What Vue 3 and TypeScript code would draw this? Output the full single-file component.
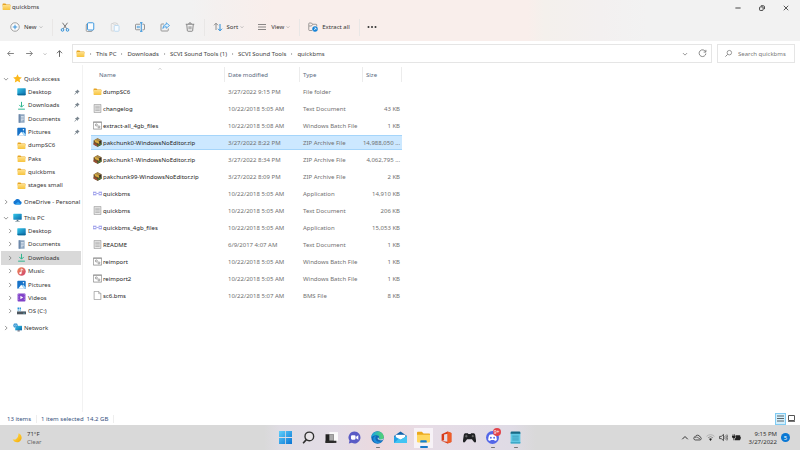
<script setup lang="ts">
import { ref } from 'vue'

interface TreeItem {
  label: string
  icon: string
  pinned?: boolean
}

interface FileRow {
  name: string
  icon: string
  date: string
  type: string
  size: string
}

const fileActions = [
  { label: 'Cut', icon: 'cut' },
  { label: 'Copy', icon: 'copy' },
  { label: 'Paste', icon: 'paste' },
  { label: 'Rename', icon: 'rename' },
  { label: 'Share', icon: 'share' },
  { label: 'Delete', icon: 'trash' },
]

const crumbs = ['This PC', 'Downloads', 'SCVI Sound Tools (1)', 'SCVI Sound Tools', 'quickbms']

const quickAccess: TreeItem[] = [
  { label: 'Desktop', icon: 'desktop', pinned: true },
  { label: 'Downloads', icon: 'download', pinned: true },
  { label: 'Documents', icon: 'document', pinned: true },
  { label: 'Pictures', icon: 'picture', pinned: true },
  { label: 'dumpSC6', icon: 'folder' },
  { label: 'Paks', icon: 'folder' },
  { label: 'quickbms', icon: 'folder' },
  { label: 'stages small', icon: 'folder' },
]

const thisPc: TreeItem[] = [
  { label: 'Desktop', icon: 'desktop' },
  { label: 'Documents', icon: 'document' },
  { label: 'Downloads', icon: 'download' },
  { label: 'Music', icon: 'music' },
  { label: 'Pictures', icon: 'picture' },
  { label: 'Videos', icon: 'video' },
  { label: 'OS (C:)', icon: 'drive' },
]

const files: FileRow[] = [
  { name: 'dumpSC6', icon: 'folder', date: '3/27/2022 9:15 PM', type: 'File folder', size: '' },
  { name: 'changelog', icon: 'text', date: '10/22/2018 5:05 AM', type: 'Text Document', size: '43 KB' },
  { name: 'extract-all_4gb_files', icon: 'batch', date: '10/22/2018 5:08 AM', type: 'Windows Batch File', size: '1 KB' },
  { name: 'pakchunk0-WindowsNoEditor.zip', icon: 'zip', date: '3/27/2022 8:22 PM', type: 'ZIP Archive File', size: '14,988,050 ...' },
  { name: 'pakchunk1-WindowsNoEditor.zip', icon: 'zip', date: '3/27/2022 8:34 PM', type: 'ZIP Archive File', size: '4,062,795 ...' },
  { name: 'pakchunk99-WindowsNoEditor.zip', icon: 'zip', date: '3/27/2022 8:09 PM', type: 'ZIP Archive File', size: '2 KB' },
  { name: 'quickbms', icon: 'app', date: '10/22/2018 5:05 AM', type: 'Application', size: '14,910 KB' },
  { name: 'quickbms', icon: 'text', date: '10/22/2018 5:05 AM', type: 'Text Document', size: '206 KB' },
  { name: 'quickbms_4gb_files', icon: 'app', date: '10/22/2018 5:05 AM', type: 'Application', size: '15,053 KB' },
  { name: 'README', icon: 'text', date: '6/9/2017 4:07 AM', type: 'Text Document', size: '1 KB' },
  { name: 'reimport', icon: 'batch', date: '10/22/2018 5:05 AM', type: 'Windows Batch File', size: '1 KB' },
  { name: 'reimport2', icon: 'batch', date: '10/22/2018 5:05 AM', type: 'Windows Batch File', size: '1 KB' },
  { name: 'sc6.bms', icon: 'blank', date: '10/22/2018 5:07 AM', type: 'BMS File', size: '8 KB' },
]

const apps = [
  { label: 'Start', icon: 'start' },
  { label: 'Search', icon: 'magnifier' },
  { label: 'Task view', icon: 'taskview' },
  { label: 'Chat', icon: 'chat' },
  { label: 'Edge', icon: 'edge', running: true },
  { label: 'Mail', icon: 'mail' },
  { label: 'File Explorer', icon: 'explorer', active: true },
  { label: 'Office', icon: 'office' },
  { label: 'Games', icon: 'gamepad' },
  { label: 'Discord', icon: 'discord', running: true, badge: '9+' },
  { label: 'Notepad', icon: 'notepad', running: true },
]

const selected = ref(3)
const query = ref('')
</script>

<template>
  <svg class="defs" aria-hidden="true">
    <defs>
      <linearGradient id="g-folder" x1="0" y1="0" x2="0" y2="1"><stop offset="0" stop-color="#ffe08a" /><stop offset="1" stop-color="#f7c440" /></linearGradient>
      <linearGradient id="g-desk" x1="0" y1="0" x2="1" y2="1"><stop offset="0" stop-color="#35c8ea" /><stop offset="1" stop-color="#0a67a8" /></linearGradient>
      <linearGradient id="g-start" x1="0" y1="0" x2="1" y2="1"><stop offset="0" stop-color="#5fd0fb" /><stop offset="1" stop-color="#0a74d4" /></linearGradient>
      <linearGradient id="g-edge" x1="0" y1="0" x2="1" y2="0"><stop offset="0" stop-color="#1ba4e6" /><stop offset="1" stop-color="#55d66b" /></linearGradient>
      <linearGradient id="g-moon" x1="0" y1="0" x2="1" y2="1"><stop offset="0" stop-color="#ffe45c" /><stop offset="1" stop-color="#f5a800" /></linearGradient>
      <linearGradient id="g-music" x1="0" y1="0" x2="1" y2="1"><stop offset="0" stop-color="#f08a54" /><stop offset="1" stop-color="#cf4470" /></linearGradient>
    </defs>
    <symbol id="i-folder" viewBox="0 0 16 16"><path d="M1 3.500q0-1 1-1h4l1.800 1.800H14q1 0 1 1V8H1z" fill="#e6a422" /><rect x="1" y="5.200" width="14" height="8.800" rx="1" fill="url(#g-folder)" /></symbol>
    <symbol id="i-star" viewBox="0 0 16 16"><path d="M8 0.500l2.300 5 5.400.6-4 3.700 1.100 5.400L8 12.500l-4.800 2.700 1.100-5.400-4-3.700 5.400-.6z" fill="#fbb81c" /></symbol>
    <symbol id="i-desktop" viewBox="0 0 16 16"><rect x="0.500" y="2" width="15" height="12.500" rx="1" fill="url(#g-desk)" /><path d="M1 12h14v1.500q0 1-1 1H2q-1 0-1-1z" fill="#0b6c9c" /></symbol>
    <symbol id="i-download" viewBox="0 0 16 16"><path d="M8 1.500v9M4 7l4 4 4-4M2 14.500h12" fill="none" stroke="#26b38a" stroke-width="1.700" /></symbol>
    <symbol id="i-document" viewBox="0 0 16 16"><path d="M3 0.500h10.500v15H3z" fill="#8ea6c0" /><path d="M3 0.500h3v15H3z" fill="#6d89aa" /><path d="M7 4.500h5M7 7h5M7 9.500h5M7 12h3" stroke="#f4f8fc" stroke-width="1.200" /></symbol>
    <symbol id="i-picture" viewBox="0 0 16 16"><rect x="0.500" y="1.500" width="15" height="14" rx="1.500" fill="#1672c8" /><path d="M2 15.500l5.500-7 6.500 7z" fill="#fff" /><path d="M9 10l2-2 4 5v2h-2z" fill="#a8dcfa" /><circle cx="11.500" cy="5" r="1.300" fill="#fff" /></symbol>
    <symbol id="i-music" viewBox="0 0 16 16"><circle cx="8" cy="8" r="7.500" fill="url(#g-music)" /><path d="M7.500 11V3.500l3.500 2" fill="none" stroke="#fff" stroke-width="1.400" /><circle cx="6" cy="11" r="2" fill="#fff" /></symbol>
    <symbol id="i-video" viewBox="0 0 16 16"><rect x="1" y="1" width="14" height="14" rx="1.500" fill="#8142c8" /><path d="M6 5l5 3-5 3z" fill="#fff" /><path d="M3 2v12M13 2v12" stroke="#c5a0ee" stroke-width="1.200" stroke-dasharray="1.500 1.500" /></symbol>
    <symbol id="i-drive" viewBox="0 0 16 16"><path d="M0 8h16v5H0z" fill="#4d565e" /><path d="M1 7h14l1 2H0z" fill="#929da6" /><path d="M1 1h2.500v2.500H1zM4.500 1H7v2.500H4.500zM1 4.300h2.500v2H1zM4.500 4.300H7v2H4.500z" fill="#1d91d8" /><path d="M11 11h3" stroke="#70d9ff" /></symbol>
    <symbol id="i-cloud" viewBox="0 0 16 16"><path d="M4 13.500a3.700 3.700 0 0 1-.3-7.300A5 5 0 0 1 12.800 7a3.300 3.300 0 0 1-.3 6.500z" fill="#1576d1" /><path d="M3.500 13.300L9 8.500l5 4.500q-.7.500-1.500.5H4z" fill="#2ea2ee" /></symbol>
    <symbol id="i-pc" viewBox="0 0 16 16"><rect x="0.500" y="1.500" width="15" height="10.500" rx="0.800" fill="url(#g-desk)" /><path d="M6.500 12h3v2h2.500v1H4v-1h2.500z" fill="#56717f" /></symbol>
    <symbol id="i-network" viewBox="0 0 16 16"><rect x="4" y="5" width="12" height="8" fill="url(#g-desk)" /><path d="M8 13h4v2H8z" fill="#667" /><circle cx="4.500" cy="4.500" r="4" fill="#2b8ccc" /><path d="M1 4.500h7M4.500 .5q-3 4 0 8M4.500.5q3 4 0 8" stroke="#b2e3fa" fill="none" stroke-width="0.700" /></symbol>
    <symbol id="i-pin" viewBox="0 0 16 16"><path d="M9 1l6 6-2 .7-2.500 2.500-.5 3-3-3L2 15l-1-1 4.500-5-3-3 3.200-.5L8 3z" fill="#7c8790" /></symbol>
    <symbol id="i-text" viewBox="0 0 16 16"><path d="M2 .7h12v14.600H2z" fill="#e9e9e9" stroke="#989898" stroke-width="1.200" /><path d="M4 4h8M4 6.500h8M4 9h8M4 11.500h8" stroke="#a6a6a6" stroke-width="1.200" /></symbol>
    <symbol id="i-blank" viewBox="0 0 16 16"><path d="M2 .7h8l4 4v10.600H2z" fill="#fff" stroke="#8c8c8c" stroke-width="1.200" /><path d="M10 .7v4h4" fill="none" stroke="#8c8c8c" /></symbol>
    <symbol id="i-batch" viewBox="0 0 16 16"><path d="M.6 1.600h14.800v12.800H.6z" fill="#fff" stroke="#777" stroke-width="1.200" /><path d="M.6 2.500h14.800" stroke="#999" stroke-width="1.500" /><circle cx="6" cy="7" r="1.800" fill="none" stroke="#777" stroke-width="1.200" /><circle cx="10.500" cy="10.500" r="1.800" fill="none" stroke="#777" stroke-width="1.200" /></symbol>
    <symbol id="i-zip" viewBox="0 0 16 16"><path d="M1 4.500L8 .5l7 3.500v8l-7 3.500L1 12z" fill="#70522e" /><path d="M1 4.500L8 .5l7 3.500-7 3.500z" fill="#a8894a" /><path d="M8 7.500l7-3.500v8l-7 3.500z" fill="#393029" /><path d="M3.500 3L11 6.500v4L3.500 7z" fill="#d8ac3e" /><path d="M1 9l7 3.500V15l-7-3.500z" fill="#a44b35" /><path d="M8 12l7-3v2.500l-7 3.500z" fill="#527b3b" /></symbol>
    <symbol id="i-app" viewBox="0 0 16 16"><path d="M0 5h6v1.500H0zM0 9.500h6V11H0zM10 5h6v1.500h-6zM10 9.500h6V11h-6z" fill="#8b8de6" /><path d="M0 6.500h1.300v3H0zM4.700 6.500H6v3H4.700zM10 6.500h1.300v3H10zM14.700 6.500H16v3h-1.300z" fill="#a5a7ee" /><path d="M6 8h4" stroke="#8b8de6" stroke-width="1.300" /></symbol>

    <symbol id="i-plus" viewBox="0 0 20 20"><circle cx="10" cy="10" r="8.500" fill="#fbfbfb" stroke="#858585" stroke-width="1.500" /><path d="M10 5.500v9M5.500 10h9" stroke="#1482d6" stroke-width="1.600" /></symbol>
    <symbol id="i-cut" viewBox="0 0 20 20"><path d="M5 1.500l8.500 12M15 1.500l-8.500 12" stroke="#666" stroke-width="1.700" /><circle cx="5" cy="15.800" r="2.600" fill="none" stroke="#1482d6" stroke-width="1.700" /><circle cx="15" cy="15.800" r="2.600" fill="none" stroke="#1482d6" stroke-width="1.700" /></symbol>
    <symbol id="i-copy" viewBox="0 0 20 20"><rect x="2.500" y="4" width="12" height="15" rx="2" fill="none" stroke="#898989" stroke-width="1.600" /><rect x="5" y="1.500" width="12.500" height="14.500" rx="2" fill="#f8fcff" stroke="#2b8fdd" stroke-width="1.800" /></symbol>
    <symbol id="i-paste" viewBox="0 0 20 20"><path d="M8 18H3.500q-1 0-1-1V4q0-1 1-1H6m7 0h1.500q1 0 1 1v2" fill="none" stroke="#cecece" stroke-width="1.500" /><rect x="6" y="1.500" width="7" height="3" rx="1.500" fill="none" stroke="#cecece" stroke-width="1.300" /><rect x="8.500" y="7" width="9.500" height="11.500" rx="1.500" fill="#f6fbff" stroke="#aed2ec" stroke-width="1.500" /></symbol>
    <symbol id="i-rename" viewBox="0 0 20 20"><path d="M10 4.500H2.500q-1.500 0-1.500 1.500v8q0 1.500 1.500 1.500H10M15 4.500h2.500Q19 4.500 19 6v8q0 1.500-1.500 1.500H15" fill="none" stroke="#777" stroke-width="1.500" /><path d="M4 8.500h5v3H4z" fill="#8cc4ee" stroke="#55a3dd" stroke-width="1" /><path d="M12.500 1.500v17M10 1.500h5M10 18.500h5" stroke="#1482d6" stroke-width="1.700" /></symbol>
    <symbol id="i-share" viewBox="0 0 20 20"><path d="M8 4H3.500Q2 4 2 5.500v11Q2 18 3.500 18h11.500q1.500 0 1.500-1.500V13" fill="none" stroke="#777" stroke-width="1.500" /><path d="M12.500 1.500L19 7l-6.500 5.500V9.300Q8.500 9 5.500 13q.5-7.500 7-8.300z" fill="#e5f3fd" stroke="#2b8fdd" stroke-width="1.500" /></symbol>
    <symbol id="i-trash" viewBox="0 0 20 20"><path d="M1.500 4.500h17M7.500 4q0-2.500 2.500-2.500T12.500 4M3.500 5l1.200 12.200q.2 1.300 1.500 1.300h7.600q1.300 0 1.500-1.300L16.500 5M8.200 8.500v6M11.800 8.500v6" fill="none" stroke="#666" stroke-width="1.500" /></symbol>
    <symbol id="i-sort" viewBox="0 0 20 20"><path d="M6 16V2.500M2 6.500l4-4 4 4" fill="none" stroke="#777" stroke-width="1.600" /><path d="M14 4v13.500M10 13.500l4 4 4-4" fill="none" stroke="#1482d6" stroke-width="1.800" /></symbol>
    <symbol id="i-view" viewBox="0 0 10 10"><path d="M1 2.500h8M1 5h8M1 7.500h8" stroke="#8a8786" /></symbol>
    <symbol id="i-extract" viewBox="0 0 20 20"><path d="M8 17H3Q1.500 17 1.500 15.500v-12Q1.500 2 3 2h4l2 2.500h7q1.500 0 1.500 1.500v3M2 8h5l2-3" fill="none" stroke="#777" stroke-width="1.400" /><circle cx="14" cy="14" r="5.500" fill="#1482d6" /><path d="M11.500 16.500l4.500-4.500M12.500 12H16v3.500" fill="none" stroke="#fff" stroke-width="1.300" /></symbol>
    <symbol id="i-dots" viewBox="0 0 20 20"><circle cx="3" cy="10" r="2" fill="#333" /><circle cx="10" cy="10" r="2" fill="#333" /><circle cx="17" cy="10" r="2" fill="#333" /></symbol>
    <symbol id="i-chevron" viewBox="0 0 16 16"><path d="M2.500 5.500L8 11l5.500-5.500" fill="none" stroke="currentColor" stroke-width="2" /></symbol>
    <symbol id="i-arrow" viewBox="0 0 16 16"><path d="M14 8H3M7.500 3.500L3 8l4.500 4.500" fill="none" stroke="currentColor" stroke-width="1.600" /></symbol>
    <symbol id="i-refresh" viewBox="0 0 16 16"><path d="M13.500 5A6 6 0 1 0 14 8M14 1.500V5.500h-4" fill="none" stroke="currentColor" stroke-width="1.500" /></symbol>
    <symbol id="i-search" viewBox="0 0 16 16"><circle cx="9.500" cy="6.500" r="4" fill="none" stroke="currentColor" stroke-width="1.300" /><path d="M6.500 9.500L2.500 13.500" stroke="currentColor" stroke-width="1.500" /></symbol>
    <symbol id="i-min" viewBox="0 0 16 16"><path d="M1 8h14" stroke="#222" stroke-width="2.200" /></symbol>
    <symbol id="i-restore" viewBox="0 0 16 16"><rect x="1.500" y="5" width="9.500" height="9.500" rx="2" fill="none" stroke="#222" stroke-width="2.200" /><path d="M5 2h6.500q3 0 3 3v6" fill="none" stroke="#222" stroke-width="2.200" /></symbol>
    <symbol id="i-close" viewBox="0 0 16 16"><path d="M2 2l12 12M14 2L2 14" stroke="#222" stroke-width="2" /></symbol>

    <symbol id="i-start" viewBox="0 0 24 24"><path d="M0 0h11.300v11.300H0zM12.700 0H24v11.300H12.700zM0 12.700h11.300V24H0zM12.700 12.700H24V24H12.700z" fill="url(#g-start)" /></symbol>
    <symbol id="i-magnifier" viewBox="0 0 24 24"><circle cx="13.500" cy="10" r="8" fill="#e8e4e8" stroke="#303030" stroke-width="2.500" /><path d="M8 16l-6 6.500" stroke="#303030" stroke-width="3" /></symbol>
    <symbol id="i-taskview" viewBox="0 0 24 24"><path d="M8 2h16v16H8z" fill="#fafafa" /><path d="M1 6h15v16H1z" fill="#222" /><path d="M8 6h8v12H8z" fill="#aaa" /><path d="M1 18h20v4H1z" fill="#2a2a2a" /></symbol>
    <symbol id="i-chat" viewBox="0 0 24 24"><path d="M12 1a11 11 0 1 1-5 20.800L1.500 23l1.200-5A11 11 0 0 1 12 1z" fill="#5a5bc5" /><rect x="5.500" y="8" width="8.500" height="8" rx="2" fill="#fff" /><path d="M15 10.500L19 8v8l-4-2.500z" fill="#fff" /></symbol>
    <symbol id="i-edge" viewBox="0 0 24 24"><circle cx="12" cy="12" r="11.500" fill="#1267b4" /><path d="M.7 13C0-3 23.500-3 23.500 11.500c0 5-8 5.500-9 3 2-4-1-7-5-6.500C5 8.300 2 10 .7 13z" fill="url(#g-edge)" /><path d="M8.500 11c-2 6 4 11 12 7.500C17 24.500 5 24 4 15c0-4 2.500-6 6-6z" fill="#1d8edb" /><path d="M13 11.500c-1.500 2-.5 6 8 5.500l2-3q-5 3-8 1z" fill="#e5eaf2" /></symbol>
    <symbol id="i-mail" viewBox="0 0 24 24"><path d="M0 9L12 1l12 8v13H0z" fill="#1263ac" /><path d="M3 7h18v10H3z" fill="#fff" /><path d="M0 9l12 7 12-7v13H0z" fill="#25a0e5" /><path d="M0 22l9-8 3 2 12-7v13z" fill="#42c4f3" /></symbol>
    <symbol id="i-explorer" viewBox="0 0 24 24"><path d="M0 3Q0 1.500 1.500 1.500H9l3 3h10.500Q24 4.500 24 6v12H0z" fill="#eba81c" /><path d="M0 7h24v12.500q0 1.500-1.500 1.500h-21Q0 21 0 19.500z" fill="#ffd760" /><path d="M6 21v-2.500q0-1.500 1.500-1.500h9q1.500 0 1.500 1.500V21z" fill="#1380d2" /></symbol>
    <symbol id="i-office" viewBox="0 0 24 24"><path d="M3 6L14 1l7 2.500v17L14 23 3 18.500l11 1.500V5L7.500 6.500v10.500L3 18.500z" fill="#d83b19" /><path d="M14 1l7 2.500v17L14 23z" fill="#ef5e28" /></symbol>
    <symbol id="i-gamepad" viewBox="0 0 24 24"><path d="M4 4h5l1 1.500h4L15 4h5q2 0 2.500 3L24 17q.5 4-2 4-1.500 0-3.500-3l-2-3h-9l-2 3Q3.500 21 2 21q-2.500 0-2-4L1.500 7Q2 4 4 4z" fill="#202124" /><path d="M6 7v5M3.500 9.500h5" stroke="#777" stroke-width="1.500" /><circle cx="18" cy="9.500" r="2" fill="#666" /></symbol>
    <symbol id="i-discord" viewBox="0 0 24 24"><circle cx="12" cy="12" r="12" fill="#5467e8" /><path d="M6.500 7Q12 5 17.500 7q3 5 2.500 9.500-2 1.500-4 1.700L15 16.500H9l-1 1.700q-2-.2-4-1.700Q3.500 12 6.500 7z" fill="#fff" /><circle cx="9" cy="12.500" r="1.700" fill="#5467e8" /><circle cx="15" cy="12.500" r="1.700" fill="#5467e8" /></symbol>
    <symbol id="i-notepad" viewBox="0 0 24 24"><rect x="3" y="2" width="18" height="21" rx="1.500" fill="#62c8e4" /><path d="M3 3.500Q3 1 5 1h14q2 0 2 2.500V5H3z" fill="#176985" /><path d="M6 9.500h12M6 13h12M6 16.500h12" stroke="#2c8fae" stroke-width="1.300" /><path d="M3 20.500h18V23H3z" fill="#3ba6c4" /></symbol>
    <symbol id="i-moon" viewBox="0 0 24 24"><path d="M15.500 2A11 11 0 1 1 1.500 15.500Q5 18 9.500 16 16 12 15.500 2z" fill="url(#g-moon)" /></symbol>
    <symbol id="i-skycloud" viewBox="0 0 20 16"><path d="M5 13.500a3.700 3.700 0 0 1-.3-7.300A6 6 0 0 1 15.800 7a3.300 3.300 0 0 1-.3 6.500z" fill="none" stroke="#333" stroke-width="1.800" /><path d="M4.500 8q3-2 6 0l5 3" fill="none" stroke="#333" stroke-width="1.500" /></symbol>
    <symbol id="i-wifi" viewBox="0 0 16 16"><path d="M1 6q7-6 14 0" fill="none" stroke="#aaa" stroke-width="1.500" /><path d="M3.500 8.500q4.500-4 9 0" fill="none" stroke="#888" stroke-width="1.500" /><path d="M5.500 10.500q2.500-2 5 0L8 14z" fill="#222" /></symbol>
    <symbol id="i-speaker" viewBox="0 0 16 16"><path d="M1 6h3l4-3.500v11L4 10H1z" fill="none" stroke="#333" stroke-width="1.400" /><path d="M10 6q1.500 2 0 4M12 4q3 4 0 8M14 2.500q3.500 5.500 0 11" fill="none" stroke="#444" stroke-width="1.200" /></symbol>
    <symbol id="i-battery" viewBox="0 0 20 18"><path d="M8 4h9q1.500 0 1.500 1.500v8q0 1.500-1.500 1.500H6v-3q3-1 3-5z" fill="#222" /><path d="M18.500 8H20v3.500h-1.500z" fill="#222" /><path d="M0 5h8v3q-1 3-4 3T0 8zM1.500 1.500H3V5H1.500zM5 1.500h1.500V5H5zM3.300 10h1.500v5H3.300z" fill="#222" /></symbol>
    <symbol id="i-details" viewBox="0 0 7 7"><path d="M0 1h7M0 3.500h7M0 6h7" stroke="#5b6468" /></symbol>
    <symbol id="i-large" viewBox="0 0 7 7"><path d="M.5.500h6v5h-6z" fill="#fff" stroke="#555" /><path d="M0 6.500h7" stroke="#777" /></symbol>
  </svg>

  <div class="screen">
    <main class="window">
      <header class="chrome">
        <div class="titlebar">
          <svg class="ico"><use href="#i-folder" /></svg>
          <h1>quickbms</h1>
          <div class="captions">
            <button type="button" aria-label="Minimize"><svg><use href="#i-min" /></svg></button>
            <button type="button" aria-label="Restore"><svg><use href="#i-restore" /></svg></button>
            <button type="button" aria-label="Close"><svg><use href="#i-close" /></svg></button>
          </div>
        </div>
        <div class="toolbar">
          <div class="tools">
            <button type="button" class="wide"><svg class="tool"><use href="#i-plus" /></svg>New<svg class="tiny"><use href="#i-chevron" /></svg></button>
          </div>
          <div class="tools">
            <button v-for="a in fileActions" :key="a.label" type="button" class="square" :aria-label="a.label">
              <svg class="tool"><use :href="'#i-' + a.icon" /></svg>
            </button>
          </div>
          <div class="tools">
            <button type="button" class="wide"><svg class="tool"><use href="#i-sort" /></svg>Sort<svg class="tiny"><use href="#i-chevron" /></svg></button>
            <button type="button" class="wide"><svg class="tool"><use href="#i-view" /></svg>View<svg class="tiny"><use href="#i-chevron" /></svg></button>
          </div>
          <div class="tools">
            <button type="button" class="wide"><svg class="tool"><use href="#i-extract" /></svg>Extract all</button>
          </div>
          <div class="tools">
            <button type="button" class="square" aria-label="See more"><svg class="tool"><use href="#i-dots" /></svg></button>
          </div>
        </div>
      </header>

      <div class="navbar">
        <div class="history">
          <button type="button" aria-label="Back"><svg class="ico"><use href="#i-arrow" /></svg></button>
          <button type="button" aria-label="Forward"><svg class="ico flip"><use href="#i-arrow" /></svg></button>
          <button type="button" aria-label="Recent locations"><svg class="tiny"><use href="#i-chevron" /></svg></button>
          <button type="button" aria-label="Up"><svg class="ico up"><use href="#i-arrow" /></svg></button>
        </div>
        <nav class="address" aria-label="Address">
          <svg class="ico"><use href="#i-folder" /></svg>
          <template v-for="c in crumbs" :key="c">
            <svg class="tiny right"><use href="#i-chevron" /></svg>
            <a href="#">{{ c }}</a>
          </template>
          <div class="address-end">
            <button type="button" aria-label="Previous locations"><svg class="small"><use href="#i-chevron" /></svg></button>
            <button type="button" aria-label="Refresh"><svg class="ico"><use href="#i-refresh" /></svg></button>
          </div>
        </nav>
        <label class="search">
          <svg class="ico"><use href="#i-search" /></svg>
          <input v-model="query" type="text" aria-label="Search quickbms" placeholder="Search quickbms" />
        </label>
      </div>

      <div class="body">
        <nav class="tree" aria-label="Folders">
          <ul class="quick">
            <li>
              <a href="#"><svg class="small"><use href="#i-chevron" /></svg><svg class="ico"><use href="#i-star" /></svg>Quick access</a>
            </li>
            <li v-for="t in quickAccess" :key="t.label">
              <a href="#" class="child"><svg class="ico"><use :href="'#i-' + t.icon" /></svg>{{ t.label }}<svg v-if="t.pinned" class="pin"><use href="#i-pin" /></svg></a>
            </li>
          </ul>
          <ul>
            <li>
              <a href="#"><svg class="small right"><use href="#i-chevron" /></svg><svg class="ico"><use href="#i-cloud" /></svg>OneDrive - Personal</a>
            </li>
          </ul>
          <ul class="pc">
            <li>
              <a href="#"><svg class="small"><use href="#i-chevron" /></svg><svg class="ico"><use href="#i-pc" /></svg>This PC</a>
            </li>
            <li v-for="t in thisPc" :key="t.label" :class="{ current: t.label === 'Downloads' }">
              <a href="#" class="branch"><svg class="small right"><use href="#i-chevron" /></svg><svg class="ico"><use :href="'#i-' + t.icon" /></svg>{{ t.label }}</a>
            </li>
          </ul>
          <ul>
            <li>
              <a href="#"><svg class="small right"><use href="#i-chevron" /></svg><svg class="ico"><use href="#i-network" /></svg>Network</a>
            </li>
          </ul>
        </nav>

        <section class="listing" aria-label="Files">
          <table>
            <colgroup>
              <col class="c-name" />
              <col class="c-date" />
              <col class="c-type" />
              <col class="c-size" />
            </colgroup>
            <thead>
              <tr>
                <th>Name<svg class="tiny sorted"><use href="#i-chevron" /></svg></th>
                <th>Date modified</th>
                <th>Type</th>
                <th>Size</th>
              </tr>
            </thead>
            <tbody>
              <tr v-for="(f, i) in files" :key="i" :class="{ selected: i === selected }" @click="selected = i">
                <td><div class="name"><svg class="ico"><use :href="'#i-' + f.icon" /></svg>{{ f.name }}</div></td>
                <td>{{ f.date }}</td>
                <td>{{ f.type }}</td>
                <td>{{ f.size }}</td>
              </tr>
            </tbody>
          </table>
        </section>
      </div>

      <footer class="status">
        <span class="count">13 items</span>
        <span class="chosen"><span>1 item selected</span><span>14.2 GB</span></span>
        <div class="modes">
          <button type="button" class="on" aria-label="Details"><svg class="ico"><use href="#i-details" /></svg></button>
          <button type="button" aria-label="Large icons"><svg class="ico"><use href="#i-large" /></svg></button>
        </div>
      </footer>
    </main>

    <footer class="taskbar">
      <button type="button" class="weather">
        <svg><use href="#i-moon" /></svg>
        <span><b>71°F</b><em>Clear</em></span>
      </button>
      <div class="apps">
        <button v-for="a in apps" :key="a.label" type="button" :aria-label="a.label" :class="{ active: a.active, running: a.running }">
          <svg><use :href="'#i-' + a.icon" /></svg>
          <span v-if="a.badge" class="badge">{{ a.badge }}</span>
        </button>
      </div>
      <div class="tray">
        <button type="button" aria-label="Show hidden icons"><svg class="up-chevron"><use href="#i-chevron" /></svg></button>
        <button type="button" aria-label="OneDrive"><svg><use href="#i-skycloud" /></svg></button>
        <button type="button" aria-label="Wi-Fi"><svg><use href="#i-wifi" /></svg></button>
        <button type="button" aria-label="Volume"><svg><use href="#i-speaker" /></svg></button>
        <button type="button" aria-label="Battery"><svg><use href="#i-battery" /></svg></button>
        <button type="button" class="clock"><span>9:15 PM</span><span>3/27/2022</span></button>
        <button type="button" class="notices">5</button>
      </div>
    </footer>
  </div>
</template>

<style>
body {
  margin: 0;
}
</style>

<style scoped>
.defs {
  position: absolute;
  width: 0;
  height: 0;
}
.screen {
  display: flex;
  flex-direction: column;
  min-height: 100vh;
  background: #fff;
  color: #333;
  font-family: 'Noto Sans', 'Open Sans', sans-serif;
  font-size: 6px;
  line-height: 8px;
  white-space: nowrap;
}
svg {
  display: block;
  flex: none;
  width: 9px;
  height: 9px;
}
.tiny {
  width: 4px;
  height: 4px;
}
.small {
  width: 6px;
  height: 6px;
}
.tool {
  width: 10px;
  height: 10px;
}
.right {
  transform: rotate(-90deg);
}
.flip {
  transform: scaleX(-1);
}
.up {
  transform: rotate(90deg);
}
button {
  display: flex;
  align-items: center;
  justify-content: center;
  padding: 0;
  border: 0;
  background: none;
  color: inherit;
  font: inherit;
}
a {
  color: inherit;
  text-decoration: none;
}
ul {
  margin: 0;
  padding: 0;
  list-style: none;
}

.window {
  display: flex;
  flex: 1;
  flex-direction: column;
}
.chrome {
  background: linear-gradient(90deg, #f2f2f2 24%, #f4f0ef 27%, #f9eeeb 34%, #f9eeeb 66%, #f4f0ec 68%, #f3f0f0 75%, #f2f2f2 81%);
}
.titlebar {
  display: flex;
  align-items: center;
  gap: 1px;
  height: 13px;
  padding-left: 2px;
}
h1 {
  margin: 0;
  font-size: 6px;
  font-weight: 400;
}
.captions {
  display: flex;
  align-self: flex-end;
  margin-left: auto;
  padding-right: 2px;
}
.captions button {
  width: 24px;
  height: 11px;
}
.captions svg {
  width: 6px;
  height: 6px;
}
.toolbar {
  display: flex;
  align-items: center;
  height: 28px;
  padding-left: 10px;
}
.tools {
  display: flex;
  align-items: center;
  gap: 13px;
  height: 17px;
  padding-right: 9px;
}
.tools + .tools {
  padding-left: 8px;
  border-left: 1px solid #e9e7e6;
}
.tools:nth-child(2) {
  gap: 0;
  padding: 0 1px 0 0;
}
.tools:last-child {
  padding-left: 0;
}
.square {
  width: 25px;
  height: 16px;
}
.wide {
  gap: 2px;
}
.wide .tool {
  margin-right: 2px;
}
.wide .tiny {
  color: #888;
}

.navbar {
  display: flex;
  align-items: center;
  gap: 5px;
  padding: 3px 5px 2px 6px;
  color: #777;
}
.history {
  display: grid;
  grid-template-columns: 19px 18px 12px 12px;
  align-items: center;
}
.history button {
  justify-content: flex-start;
}
.history .up {
  color: #555;
}
.address,
.search {
  display: flex;
  align-items: center;
  box-sizing: border-box;
  height: 19px;
  border: 1px solid #e5e5e5;
}
.address {
  flex: 1;
  gap: 4px;
  padding-left: 3px;
  color: #3e3e3e;
}
.address .tiny {
  width: 3px;
}
.address-end {
  display: flex;
  gap: 10px;
  margin-left: auto;
  padding-right: 4px;
  color: #777;
}
.search {
  width: 78px;
  gap: 5px;
  padding-left: 6px;
  color: #777;
}
.search input {
  flex: 1;
  min-width: 0;
  padding: 0;
  border: 0;
  outline: 0;
  background: none;
  color: #333;
  font: inherit;
}
.search input::placeholder {
  color: #777;
  opacity: 1;
}

.body {
  display: flex;
  flex: 1;
}
.tree {
  display: flex;
  flex-direction: column;
  gap: 3px;
  box-sizing: border-box;
  width: 83px;
  padding: 7px 1px 0;
  border-right: 1px solid #f2f2f2;
}
.tree ul {
  display: grid;
  grid-auto-rows: 1fr;
  min-height: 13px;
}
.tree .quick {
  height: 120px;
}
.tree .pc {
  height: 107px;
}
.tree a {
  display: flex;
  align-items: center;
  gap: 2px;
  height: 100%;
  padding-left: 2px;
}
.tree .small {
  margin-right: 2px;
  color: #777;
}
.tree .child {
  padding-left: 16px;
}
.tree .branch {
  padding-left: 6px;
}
.tree .pin {
  width: 6px;
  height: 6px;
  margin-left: auto;
  margin-right: 1px;
}
.current {
  background: #d9d9d9;
}

.listing {
  flex: 1;
  padding-left: 8px;
}
table {
  width: 311px;
  table-layout: fixed;
  border-collapse: separate;
  border-spacing: 0 2px;
}
.c-name {
  width: 133px;
}
.c-date {
  width: 75px;
}
.c-type {
  width: 63px;
}
th,
td {
  height: 15px;
  padding: 0 3px;
}
th {
  position: relative;
  border-left: 1px solid #ececec;
  color: #5a6a80;
  font-weight: 400;
  text-align: left;
}
th:first-child {
  padding-left: 8px;
  border-left: 0;
}
th:last-child {
  border-right: 1px solid #ececec;
}
.sorted {
  position: absolute;
  top: 0;
  right: 62px;
  color: #999;
  transform: rotate(180deg);
}
td {
  padding-left: 4px;
  color: #707070;
}
td:first-child {
  padding-left: 2px;
  color: #222;
}
td:last-child {
  padding: 0 2px 0 0;
  text-align: right;
}
.name {
  display: flex;
  align-items: center;
  gap: 1px;
}
.selected td {
  background: #cce8ff;
  box-shadow: inset 0 1px #a5d5fa, inset 0 -1px #a5d5fa;
}

.status {
  display: flex;
  align-items: center;
  height: 13px;
  padding: 0 3px 0 7px;
  color: #36527e;
}
.count,
.chosen {
  padding-right: 5px;
  border-right: 1px solid #eee;
}
.chosen {
  display: flex;
  gap: 3px;
  padding-left: 4px;
}
.modes {
  display: flex;
  margin-left: auto;
}
.modes button {
  box-sizing: border-box;
  width: 11px;
  height: 12px;
}
.modes .ico {
  width: 7px;
  height: 7px;
}
.modes .on {
  border: 1px solid #80cbf3;
  background: #d3effc;
}

.taskbar {
  display: grid;
  grid-template-columns: 1fr auto 1fr;
  align-items: center;
  height: 25px;
  background: linear-gradient(90deg, #d9d9d9 33%, #dfdce3 35%, #e3dce6 42%, #ecd9de 48%, #e6dce6 54%, #dfdbe5 64%, #d9d9d9 67%);
}
.weather {
  justify-content: flex-start;
  gap: 5px;
  padding-left: 12px;
  text-align: left;
}
.weather svg {
  width: 10px;
  height: 11px;
}
.weather b,
.weather em {
  display: block;
  font-style: normal;
  font-weight: 400;
}
.weather em {
  color: #666;
}
.apps {
  display: flex;
}
.apps button {
  position: relative;
  width: 23px;
  height: 23px;
}
.apps svg {
  width: 13px;
  height: 13px;
}
.apps .active {
  background: linear-gradient(#f7f2f7, #f7f2f7) center / 19px 20px no-repeat;
}
.apps .active::after,
.apps .running::after {
  position: absolute;
  bottom: 1px;
  left: 10px;
  width: 4px;
  height: 1px;
  border-radius: 1px;
  background: #777;
  content: '';
}
.apps .active::after {
  left: 8px;
  width: 8px;
  height: 2px;
  background: #1679c8;
}
.badge {
  position: absolute;
  top: 2px;
  right: 3px;
  width: 8px;
  border-radius: 4px;
  background: #e2434b;
  color: #fff;
  font-size: 5px;
  line-height: 8px;
}
.tray {
  display: flex;
  align-items: center;
  justify-content: flex-end;
  gap: 4px;
  padding-right: 10px;
}
.tray svg {
  width: 9px;
  height: 9px;
}
.tray .up-chevron {
  width: 8px;
  height: 8px;
  transform: rotate(180deg);
}
.clock {
  flex-direction: column;
  align-items: flex-end;
  margin-left: 4px;
}
.notices {
  width: 9px;
  height: 9px;
  border-radius: 50%;
  background: #0a78d4;
  color: #fff;
}
</style>
